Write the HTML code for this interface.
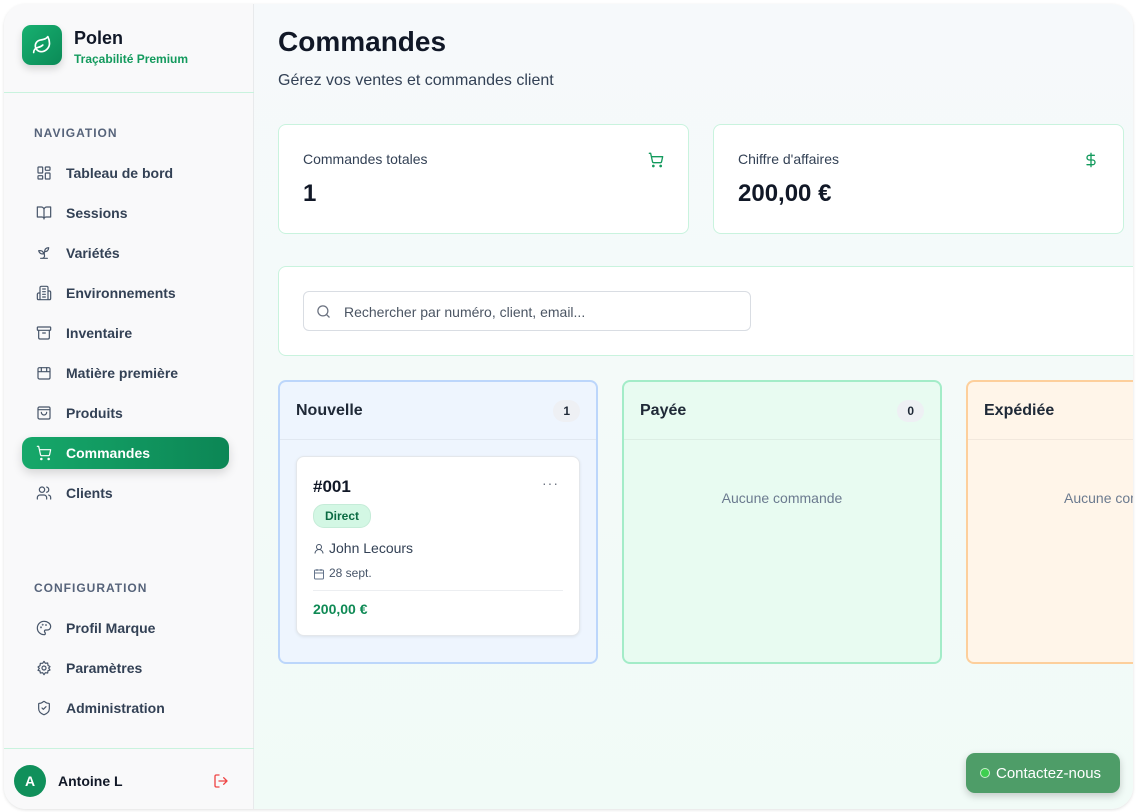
<!DOCTYPE html>
<html><head><meta charset="utf-8"><style>
*{box-sizing:border-box;margin:0;padding:0}
body{width:1136px;height:812px;background:#fff;font-family:"Liberation Sans",sans-serif;overflow:hidden;position:relative}
.win{position:absolute;left:4px;top:4px;width:1129px;height:805px;border-radius:22px;overflow:hidden;background:linear-gradient(180deg,#f6f9fb,#f1fbf7);box-shadow:0 1px 3px rgba(0,0,0,.12)}
.side{position:absolute;left:0;top:0;width:250px;height:805px;background:#f9f9fa;border-right:1px solid #e8eaec}
.logo{position:absolute;left:18px;top:21px;width:40px;height:40px;border-radius:9px;background:linear-gradient(135deg,#17b070,#0b8a57);box-shadow:0 4px 8px rgba(0,0,0,.15)}
.brand{position:absolute;left:70px;top:24px;font-weight:bold;font-size:18px;color:#111827}
.sub{position:absolute;left:70px;top:48px;font-size:12px;color:#139a5d;font-weight:bold}
.hr1{position:absolute;left:0;top:88px;width:250px;border-top:1px solid #c9f3de}
.sec{position:absolute;left:30px;font-size:12px;letter-spacing:1px;color:#56637a;font-weight:bold}
.item{position:absolute;left:18px;width:207px;height:32px;display:flex;align-items:center;padding-left:14px;font-size:14px;color:#334155;font-weight:bold}
.item svg{width:16px;height:16px;margin-right:14px;fill:none;stroke:#475569;stroke-width:1.8;stroke-linecap:round;stroke-linejoin:round}
.item.act{background:linear-gradient(90deg,#16a86a,#0c8655);color:#fff;border-radius:10px;box-shadow:0 4px 10px rgba(0,0,0,.15)}
.item.act svg{stroke:#fff}
.hr2{position:absolute;left:0;top:744px;width:250px;border-top:1px solid #c9f3de}
.av{position:absolute;left:10px;top:761px;width:32px;height:32px;border-radius:50%;background:#10905b;color:#fff;font-weight:bold;font-size:14px;display:flex;align-items:center;justify-content:center}
.main{position:absolute;left:250px;top:0;right:0;bottom:0}
h1{position:absolute;left:24px;top:22px;font-size:28px;color:#111827}
.desc{position:absolute;left:24px;top:68px;font-size:16px;color:#334155}
.card{position:absolute;background:#fff;border:1px solid #c9f3de;border-radius:8px}
.cl{position:absolute;left:24px;top:26px;font-size:14px;color:#334155}
.cv{position:absolute;left:24px;top:55px;font-size:24px;font-weight:bold;color:#111827}
.col{position:absolute;top:376px;width:320px;height:284px;border-radius:8px;border:2px solid}
.colh{height:58px;border-bottom:1px solid rgba(0,0,0,.05);display:flex;align-items:center;padding:0 16px;font-size:16px;font-weight:bold;color:#1f2937;justify-content:space-between}
.badge{background:#eef0f4;border-radius:12px;font-size:12px;padding:4px 10px;color:#1f2937}
.empty{text-align:center;margin-top:50px;color:#6b7a8f;font-size:14px}
</style></head><body><div class="win">
<div class="side">
<div class="logo"><svg viewBox="0 0 24 24" width="40" height="40" style="padding:10px" fill="none" stroke="#fff" stroke-width="2" stroke-linecap="round" stroke-linejoin="round"><path d="M11 20A7 7 0 0 1 9.8 6.1C15.5 5 17 4.5 19 2c1 2 2 4.2 2 8 0 5.5-4.8 10-10 10Z"/><path d="M2 21c0-3 1.9-5.4 5.2-6.1C9.5 14.4 12 13 13 12"/></svg></div>
<div class="brand">Polen</div><div class="sub">Traçabilité Premium</div>
<div class="hr1"></div>
<div class="sec" style="top:122px">NAVIGATION</div>
<div class="item" style="top:153px"><svg viewBox="0 0 24 24"><rect x="3" y="3" width="7" height="9" rx="1"/><rect x="14" y="3" width="7" height="5" rx="1"/><rect x="14" y="12" width="7" height="9" rx="1"/><rect x="3" y="16" width="7" height="5" rx="1"/></svg>Tableau de bord</div>
<div class="item" style="top:193px"><svg viewBox="0 0 24 24"><path d="M2 3h6a4 4 0 0 1 4 4v14a3 3 0 0 0-3-3H2zM22 3h-6a4 4 0 0 0-4 4v14a3 3 0 0 1 3-3h7z"/></svg>Sessions</div>
<div class="item" style="top:233px"><svg viewBox="0 0 24 24"><path d="M7 20h10M10 20c5.5-2.5.8-6.4 3-10M9.5 9.4c1.1.8 1.8 2.2 2.3 3.7-2 .4-3.5.4-4.8-.3-1.2-.6-2.3-1.9-3-4.2 2.8-.5 4.4 0 5.5.8zM14.1 6a7 7 0 0 0-1.1 4c1.9-.1 3.3-.6 4.3-1.4 1-1 1.6-2.3 1.7-4.6-2.7.1-4 1-4.9 2z"/></svg>Variétés</div>
<div class="item" style="top:273px"><svg viewBox="0 0 24 24"><path d="M6 22V4a2 2 0 0 1 2-2h8a2 2 0 0 1 2 2v18zM6 12H4a2 2 0 0 0-2 2v6a2 2 0 0 0 2 2h2M18 9h2a2 2 0 0 1 2 2v9a2 2 0 0 1-2 2h-2M10 6h4M10 10h4M10 14h4M10 18h4"/></svg>Environnements</div>
<div class="item" style="top:313px"><svg viewBox="0 0 24 24"><rect x="2" y="3" width="20" height="5" rx="1"/><path d="M4 8v11a2 2 0 0 0 2 2h12a2 2 0 0 0 2-2V8M10 12h4"/></svg>Inventaire</div>
<div class="item" style="top:353px"><svg viewBox="0 0 24 24"><rect x="3" y="4" width="18" height="17" rx="2"/><path d="M3 10h18M8 4v6M16 4v6"/></svg>Matière première</div>
<div class="item" style="top:393px"><svg viewBox="0 0 24 24"><rect x="3" y="3" width="18" height="18" rx="2"/><path d="M3 7h18M8 11a4 4 0 0 0 8 0"/></svg>Produits</div>
<div class="item act" style="top:433px"><svg viewBox="0 0 24 24"><circle cx="8" cy="21" r="1"/><circle cx="19" cy="21" r="1"/><path d="M2 2h2l2.7 12.4a2 2 0 0 0 2 1.6h9.7a2 2 0 0 0 2-1.6L22 7H5.1"/></svg>Commandes</div>
<div class="item" style="top:473px"><svg viewBox="0 0 24 24"><path d="M16 21v-2a4 4 0 0 0-4-4H6a4 4 0 0 0-4 4v2"/><circle cx="9" cy="7" r="4"/><path d="M22 21v-2a4 4 0 0 0-3-3.9M16 3.1a4 4 0 0 1 0 7.8"/></svg>Clients</div>
<div class="sec" style="top:577px">CONFIGURATION</div>
<div class="item" style="top:608px"><svg viewBox="0 0 24 24"><path d="M12 2a10 10 0 0 0 0 20c1.5 0 2-1 2-2 0-1.6-1.3-1.5-1.3-3 0-1 .8-2 2-2H17a5 5 0 0 0 5-5c0-4.4-4.5-8-10-8z"/><circle cx="7.5" cy="11" r=".5"/><circle cx="10" cy="7" r=".5"/><circle cx="15" cy="7.5" r=".5"/></svg>Profil Marque</div>
<div class="item" style="top:648px"><svg viewBox="0 0 24 24"><circle cx="12" cy="12" r="3"/><path d="M12 2l2 3 3.5-.5.5 3.5 3 2-2 2 2 3-3 1-.5 3.5-3.5-.5-2 3-2-3-3.5.5L6 16.5l-3-1 2-3-2-2 3-2L6.5 5 10 5z"/></svg>Paramètres</div>
<div class="item" style="top:688px"><svg viewBox="0 0 24 24"><path d="M20 13c0 5-3.5 7.5-7.7 9a1 1 0 0 1-.7 0C7.5 20.5 4 18 4 13V6a1 1 0 0 1 1-1c2 0 4.5-1.2 6.2-2.7a1.2 1.2 0 0 1 1.5 0C14.5 3.8 17 5 19 5a1 1 0 0 1 1 1z"/><path d="M9 12l2 2 4-4"/></svg>Administration</div>
<div class="hr2"></div>
<div class="av">A</div>
<div style="position:absolute;left:54px;top:769px;font-weight:bold;font-size:14px;color:#111827">Antoine L</div>
<svg style="position:absolute;left:209px;top:769px" width="16" height="16" viewBox="0 0 24 24" fill="none" stroke="#ef4444" stroke-width="2" stroke-linecap="round" stroke-linejoin="round"><path d="M9 21H5a2 2 0 0 1-2-2V5a2 2 0 0 1 2-2h4M16 17l5-5-5-5M21 12H9"/></svg>
</div>
<div class="main">
<h1>Commandes</h1>
<div class="desc">Gérez vos ventes et commandes client</div>
<div class="card" style="left:24px;top:120px;width:411px;height:110px"><div class="cl">Commandes totales</div><div class="cv">1</div>
<svg style="position:absolute;right:24px;top:27px" width="16" height="16" viewBox="0 0 24 24" fill="none" stroke="#139a5d" stroke-width="2" stroke-linecap="round" stroke-linejoin="round"><circle cx="8" cy="21" r="1"/><circle cx="19" cy="21" r="1"/><path d="M2 2h2l2.7 12.4a2 2 0 0 0 2 1.6h9.7a2 2 0 0 0 2-1.6L22 7H5.1"/></svg></div>
<div class="card" style="left:459px;top:120px;width:411px;height:110px"><div class="cl">Chiffre d'affaires</div><div class="cv">200,00 €</div>
<svg style="position:absolute;right:24px;top:27px" width="16" height="16" viewBox="0 0 24 24" fill="none" stroke="#139a5d" stroke-width="2" stroke-linecap="round" stroke-linejoin="round"><path d="M12 2v20M17 5H9.5a3.5 3.5 0 0 0 0 7h5a3.5 3.5 0 0 1 0 7H6"/></svg></div>
<div class="card" style="left:24px;top:262px;width:880px;height:90px;border-radius:8px 0 0 8px">
<div style="position:absolute;left:24px;top:24px;width:448px;height:40px;border:1px solid #d9dde3;border-radius:6px">
<svg style="position:absolute;left:12px;top:12px" width="15" height="15" viewBox="0 0 24 24" fill="none" stroke="#6b7280" stroke-width="2" stroke-linecap="round"><circle cx="11" cy="11" r="8"/><path d="M21 21l-4.3-4.3"/></svg>
<div style="position:absolute;left:40px;top:12px;font-size:14px;color:#4b5563">Rechercher par numéro, client, email...</div></div></div>
<div class="col" style="left:24px;background:#eef5fe;border-color:#bcd6fb">
<div class="colh">Nouvelle<span class="badge">1</span></div>
<div style="position:absolute;left:16px;top:74px;width:284px;height:180px;background:#fff;border:1px solid #e4e7eb;border-radius:8px;box-shadow:0 1px 3px rgba(0,0,0,.08)">
<div style="position:absolute;left:16px;top:20px;font-size:17px;font-weight:bold;color:#111827">#001</div>
<div style="position:absolute;right:20px;top:18px;color:#6b7280;font-size:14px;letter-spacing:1px">···</div>
<div style="position:absolute;left:16px;top:47px;background:#d3f7e4;border:1px solid #c5ecd8;border-radius:11px;font-size:12px;font-weight:bold;color:#0b6b43;padding:4px 11px">Direct</div>
<svg style="position:absolute;left:16px;top:86px" width="12" height="12" viewBox="0 0 24 24" fill="none" stroke="#475569" stroke-width="2"><circle cx="12" cy="8" r="5"/><path d="M20 21a8 8 0 0 0-16 0"/></svg>
<div style="position:absolute;left:32px;top:83px;font-size:14px;color:#334155">John Lecours</div>
<svg style="position:absolute;left:16px;top:111px" width="12" height="12" viewBox="0 0 24 24" fill="none" stroke="#64748b" stroke-width="2"><rect x="3" y="4" width="18" height="18" rx="2"/><path d="M16 2v4M8 2v4M3 10h18"/></svg>
<div style="position:absolute;left:32px;top:109px;font-size:12px;color:#475569">28 sept.</div>
<div style="position:absolute;left:16px;right:16px;top:133px;border-top:1px solid #eceef1"></div>
<div style="position:absolute;left:16px;top:144px;font-size:14px;font-weight:bold;color:#0f8a55">200,00 €</div>
</div></div>
<div class="col" style="left:368px;background:#e8fbf1;border-color:#a3ecc8">
<div class="colh">Payée<span class="badge">0</span></div><div class="empty">Aucune commande</div></div>
<div class="col" style="left:712px;background:#fff5e9;border-color:#fdcf9c;border-right:none;border-radius:8px 0 0 8px;width:180px">
<div class="colh">Expédiée</div><div class="empty" style="text-align:left;padding-left:96px;white-space:nowrap">Aucune commande</div></div>
<div style="position:absolute;left:712px;top:749px;width:154px;height:40px;border-radius:9px;background:#4e9d68;box-shadow:0 3px 8px rgba(0,0,0,.2);color:#fff;font-size:15px;display:flex;align-items:center;padding-left:14px"><span style="width:10px;height:10px;border-radius:50%;background:#3ecf4f;border:1px solid #c8f0cc;margin-right:6px"></span>Contactez-nous</div>
</div>
</div></body></html>
